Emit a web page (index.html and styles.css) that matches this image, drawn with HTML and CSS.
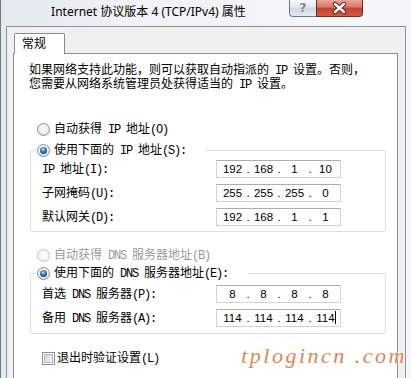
FILE: index.html
```html
<!DOCTYPE html>
<html>

<head>
    <meta charset="utf-8" />
    <title>Internet 协议版本 4 (TCP/IPv4) 属性</title>
    <link rel="stylesheet" href="styles.css">
</head>

<body>
    <div class="window">
        <div class="titlebar">
            <span class="title">Internet 协议版本 4 (TCP/IPv4) 属性</span>
            <div class="caption">
                <span class="btn_help">?</span>
                <span class="btn_close">
                    <svg width="45" height="16" viewBox="0 0 45 16">
                        <path d="M18 4 L27 12 M27 4 L18 12" stroke="#5b2620" stroke-width="4.4" stroke-linecap="round" fill="none" />
                        <path d="M18 4 L27 12 M27 4 L18 12" stroke="#fff" stroke-width="2.4" stroke-linecap="round" fill="none" />
                    </svg>
                </span>
            </div>
        </div>
        <div class="client">
            <ul class="tabs">
                <li class="active">常规</li>
            </ul>
            <div class="panel">
                <p class="intro">如果网络支持此功能，则可以获取自动指派的<span class="en"> IP </span>设置。否则，</p>
                <p class="intro">您需要从网络系统管理员处获得适当的<span class="en"> IP </span>设置。</p>

                <div class="radio first">
                    <span class="dot"></span>
                    <span class="text">自动获得<span class="en"> IP </span>地址<span class="en">(O)</span></span>
                </div>
                <fieldset class="group">
                    <legend class="radio">
                        <span class="dot checked"></span>
                        <span class="text">使用下面的<span class="en"> IP </span>地址<span class="en">(S):</span></span>
                    </legend>
                    <div class="fields">
                        <div class="row">
                            <label><span class="en">IP </span>地址<span class="en">(I):</span></label>
                            <div class="ip"><span>192</span><i>.</i><span>168</span><i>.</i><span>1</span><i>.</i><span>10</span></div>
                        </div>
                        <div class="row">
                            <label>子网掩码<span class="en">(U):</span></label>
                            <div class="ip"><span>255</span><i>.</i><span>255</span><i>.</i><span>255</span><i>.</i><span>0</span></div>
                        </div>
                        <div class="row">
                            <label>默认网关<span class="en">(D):</span></label>
                            <div class="ip"><span>192</span><i>.</i><span>168</span><i>.</i><span>1</span><i>.</i><span>1</span></div>
                        </div>
                    </div>
                </fieldset>

                <div class="radio disabled">
                    <span class="dot"></span>
                    <span class="text">自动获得<span class="en"> DNS </span>服务器地址<span class="en">(B)</span></span>
                </div>
                <fieldset class="group dns">
                    <legend class="radio">
                        <span class="dot checked"></span>
                        <span class="text">使用下面的<span class="en"> DNS </span>服务器地址<span class="en">(E):</span></span>
                    </legend>
                    <div class="fields">
                        <div class="row">
                            <label>首选<span class="en"> DNS </span>服务器<span class="en">(P):</span></label>
                            <div class="ip"><span>8</span><i>.</i><span>8</span><i>.</i><span>8</span><i>.</i><span>8</span></div>
                        </div>
                        <div class="row">
                            <label>备用<span class="en"> DNS </span>服务器<span class="en">(A):</span></label>
                            <div class="ip"><span>114</span><i>.</i><span>114</span><i>.</i><span>114</span><i>.</i><span class="caret">114</span></div>
                        </div>
                    </div>
                </fieldset>

                <div class="check">
                    <span class="box"></span>
                    <span class="text">退出时验证设置<span class="en">(L)</span></span>
                </div>
            </div>
        </div>
        <div class="watermark">tplogincn .com</div>
    </div>
</body>

</html>
```

FILE: styles.css
```css
    /*
    A. Mini Reset
*/

    *,
    *:after,
    *:before {
        box-sizing: border-box;
    }

    * {
        margin: 0;
        padding: 0;
    }

    ::before,
    ::after {
        content: "";
    }

    html,
    body {
        height: 100%;
    }

    body {
        background: #eef1f5;
        color: #000;
        font-family: "Noto Sans CJK SC", sans-serif;
        font-size: 12px;
        line-height: 1.2;
        overflow: hidden;
    }

    ul {
        list-style: none;
    }

    /* latin text inside the dialog, half width like SimSun */

    .en {
        font-family: "Liberation Mono", monospace;
        letter-spacing: -1.2px;
    }
    /*
    1. window & title bar
*/

    .window {
        position: relative;
        width: 411px;
        height: 378px;
        overflow: hidden;
        border-left: 1px solid #6f7883;
        background: linear-gradient(to right, #e2e8ee 0%, #eff2f6 30%, #f6f7f9 100%);
    }

    .titlebar {
        display: flex;
        justify-content: space-between;
        align-items: flex-start;
        height: 26px;
    }

    .title {
        padding: 4px 0 0 7px;
        font-family: "Noto Sans", "Noto Sans CJK SC", sans-serif;
        font-size: 12px;
        line-height: 16px;
        color: #000;
    }

    .caption {
        display: flex;
        margin-right: 5px;
    }

    .btn_help,
    .btn_close {
        height: 17px;
        border: 1px solid #6e7a89;
        border-top: none;
    }

    .btn_help {
        width: 27px;
        border-right: none;
        border-radius: 0 0 0 4px;
        background: linear-gradient(#f7f9fb 0%, #e3e8ee 45%, #d0d8e1 50%, #e4e9ef 100%);
        color: #7d8896;
        font: bold 13px/16px "DejaVu Sans", sans-serif;
        text-align: center;
        text-shadow: 0 0 2px #fff;
    }

    .btn_close {
        width: 47px;
        border-color: #6a2e28;
        border-radius: 0 0 4px 0;
        background: linear-gradient(#e9a598 0%, #d9776a 45%, #c4432f 50%, #d35a43 100%);
    }

    .btn_close svg {
        display: block;
    }
    /*
    2. client area, tab & panel
*/

    .client {
        height: 352px;
        margin: 0 5px;
        padding: 6px 7px 0 6px;
        border: 1px solid #8a939d;
        border-bottom: none;
        background: #f0f0f0;
    }

    .tabs {
        display: flex;
        height: 20px;
    }

    .tabs li {
        position: relative;
        z-index: 1;
        width: 51px;
        height: 21px;
        margin-left: 1px;
        padding-left: 7px;
        border: 1px solid #898c95;
        border-bottom: none;
        border-radius: 2px 2px 0 0;
        background: #fff;
        line-height: 17px;
    }

    .panel {
        height: 330px;
        padding-left: 15px;
        border: 1px solid #898c95;
        background: #fff;
    }

    .intro {
        height: 14px;
        line-height: 14px;
    }

    .intro:first-child {
        margin-top: 8px;
    }
    /*
    3. radios, group boxes & checkbox
*/

    .radio {
        display: flex;
        align-items: center;
        height: 18px;
        padding-left: 8px;
    }

    .radio.first {
        margin-top: 30px;
    }

    .radio.disabled {
        margin-top: 14px;
        color: #9a9a9a;
    }

    .dot {
        position: relative;
        flex: none;
        width: 13px;
        height: 13px;
        margin-right: 4px;
        border: 1px solid #8e8f8f;
        border-radius: 50%;
        background: radial-gradient(circle at 50% 40%, #fff 0%, #ececec 55%, #c9cacb 100%);
    }

    .dot.checked:after {
        position: absolute;
        top: 2px;
        left: 2px;
        width: 7px;
        height: 7px;
        border-radius: 50%;
        background: radial-gradient(circle at 45% 35%, #bfe6ff 0%, #3b8ac6 35%, #123f66 80%);
    }

    .disabled .dot {
        border-color: #c4c6c8;
        background: radial-gradient(circle at 50% 40%, #fff 0%, #f3f3f3 60%, #e1e2e3 100%);
    }

    .group {
        width: 356px;
        min-width: 0;
        margin: 3px 0 0 1px;
        padding: 0 0 2px 0;
        border: 1px solid #d5dfe5;
        border-radius: 3px;
    }

    .group legend.radio {
        margin-left: 5px;
        padding: 0 20px 0 1px;
    }

    .group.dns {
        margin-top: 0;
        padding-bottom: 3px;
    }

    .fields {
        margin-top: -2px;
    }

    .dns .fields {
        margin-top: 0;
    }

    .row {
        display: flex;
        align-items: center;
        height: 24px;
        padding-left: 11px;
    }

    .row label {
        width: 174px;
    }

    .check {
        display: flex;
        align-items: center;
        height: 18px;
        margin-top: 15px;
        padding-left: 13px;
    }

    .box {
        position: relative;
        flex: none;
        width: 13px;
        height: 13px;
        margin-right: 2px;
        border: 1px solid #8e8f8f;
        background: #fff;
    }

    .box:after {
        position: absolute;
        top: 1px;
        left: 1px;
        right: 1px;
        bottom: 1px;
        border: 1px solid #b3b8bf;
        background: linear-gradient(135deg, #d3d6db 0%, #f4f5f6 100%);
    }
    /*
    4. ip address fields
*/

    .ip {
        display: flex;
        align-items: center;
        width: 125px;
        height: 18px;
        padding-left: 2px;
        border: 1px solid #d0d3d8;
        border-top-color: #abadb3;
        font-family: "Liberation Sans", sans-serif;
        font-size: 11.5px;
        line-height: 16px;
    }

    .ip span {
        position: relative;
        width: 27px;
        text-align: center;
    }

    .ip i {
        width: 4px;
        font-style: normal;
        text-align: center;
    }

    .ip .caret:after {
        position: absolute;
        top: 1px;
        right: 3px;
        width: 1px;
        height: 13px;
        background: #000;
    }
    /*
    5. watermark
*/

    .watermark {
        position: absolute;
        top: 341px;
        right: 4px;
        font-family: "Liberation Serif", serif;
        font-style: italic;
        font-size: 22px;
        line-height: 30px;
        letter-spacing: 2.5px;
        color: #d98755;
        text-shadow: 0 0 2px #fff;
    }
```
